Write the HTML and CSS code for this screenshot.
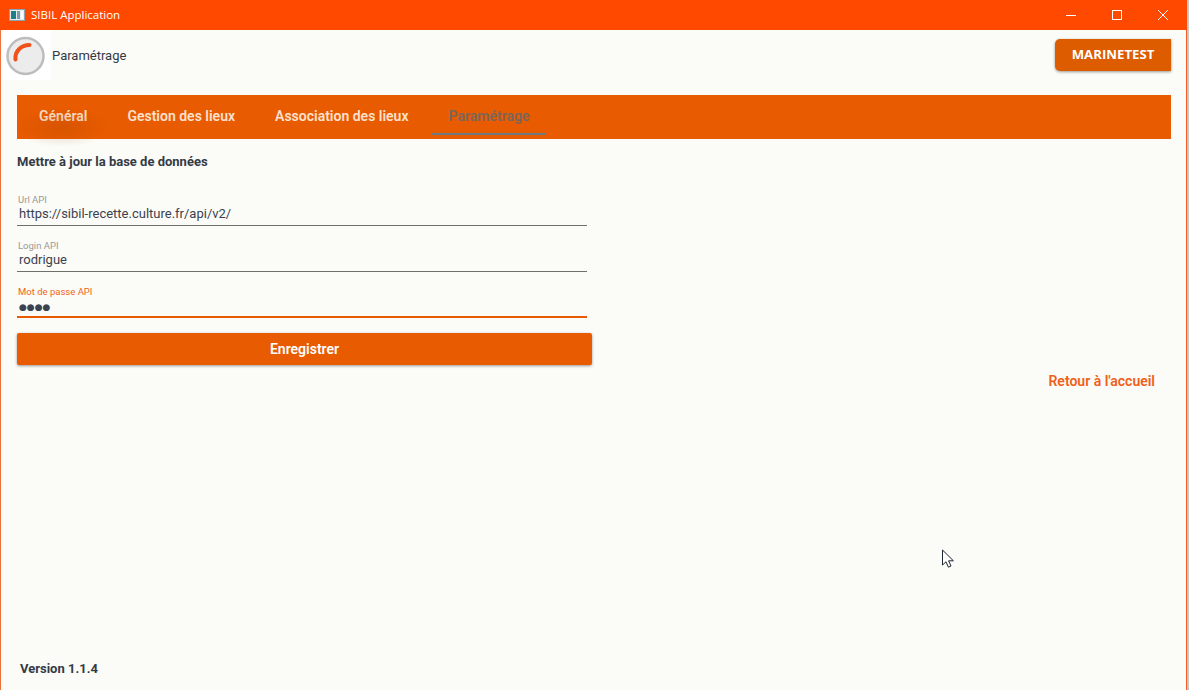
FILE: index.html
```html
<!DOCTYPE html>
<html lang="fr">
<head>
<meta charset="utf-8">
<title>SIBIL Application</title>
<link rel="stylesheet" href="styles.css">
</head>
<body>
<div class="window">
  <div class="titlebar">
    <svg class="app-icon" width="16" height="12" viewBox="0 0 16 12"><rect x="0.5" y="0.5" width="15" height="11" fill="#e6eef2" stroke="#8fa3ad"/><rect x="2" y="2" width="5" height="8" fill="#1f7f86"/><rect x="8" y="2" width="3" height="8" fill="#7f9aa8"/><rect x="12" y="2" width="2" height="8" fill="#fff"/></svg>
    <span class="app-title">SIBIL Application</span>
    <div class="win-controls">
      <span class="win-btn"><svg width="12" height="12" viewBox="0 0 12 12"><path d="M1 6.5h10" stroke="#fff" fill="none"/></svg></span>
      <span class="win-btn"><svg width="12" height="12" viewBox="0 0 12 12"><rect x="1.5" y="1.5" width="9" height="9" stroke="#fff" fill="none"/></svg></span>
      <span class="win-btn"><svg width="12" height="12" viewBox="0 0 12 12"><path d="M1 1l10 10M11 1L1 11" stroke="#fff" fill="none"/></svg></span>
    </div>
  </div>
  <div class="content">
    <header class="header">
      <div class="logo">
        <svg width="48" height="50" viewBox="0 0 48 50"><circle cx="22.5" cy="26" r="18" fill="#ececec" stroke="#bdbdbd" stroke-width="2.5"/><path d="M12.5 29.5C11.5 21.5 18 15 26.5 15" fill="none" stroke="#f0501a" stroke-width="4" stroke-linecap="round"/></svg>
      </div>
      <span class="page-name">Paramétrage</span>
      <button class="user-btn">MARINETEST</button>
    </header>
    <nav class="tabs">
      <span class="tab focused">Général</span>
      <span class="tab">Gestion des lieux</span>
      <span class="tab">Association des lieux</span>
      <span class="tab active">Paramétrage</span>
    </nav>
    <h2 class="section-title">Mettre à jour la base de données</h2>
    <form class="form">
      <div class="field"><label class="field-label">Url API</label><div class="field-value">https://sibil-recette.culture.fr/api/v2/</div></div>
      <div class="field"><label class="field-label">Login API</label><div class="field-value">rodrigue</div></div>
      <div class="field field-active"><label class="field-label">Mot de passe API</label><div class="field-value dots">●●●●</div></div>
    </form>
    <button class="save-btn">Enregistrer</button>
    <div class="back-row"><a class="back-link">Retour à l'accueil</a></div>
    <div class="version">Version 1.1.4</div>
    <svg class="cursor" width="14" height="20" viewBox="0 0 14 20"><path d="M1.5 1v15l3.5-3.2 2.4 5.4 2.6-1.2-2.4-5.2h4.8z" fill="#fff" stroke="#1c2430" stroke-width="1"/></svg>
  </div>
</div>
</body>
</html>
```
FILE: styles.css
```css
* { box-sizing: border-box; }
html, body { margin: 0; padding: 0; height: 100%; overflow: hidden; background: #c9c9c9; }
body { font-family: Roboto, "Liberation Sans", sans-serif; color: #333a45; }
.window { width: 1187px; height: 690px; display: flex; flex-direction: column; border-left: 1px solid #f0703c; border-right: 1px solid #f0602a; background: #fbfbf7; }
.titlebar { height: 30px; flex: none; background: #ff4800; display: flex; align-items: center; padding-left: 9px; color: #fff; margin: 0 -1px; }
.app-icon { display: block; }
.app-title { font-size: 11.5px; line-height: 14px; margin: 0 0 0 6px; font-family: "Open Sans", Roboto, sans-serif; }
.win-controls { margin-left: auto; display: flex; padding-right: 1px; }
.win-btn { width: 46px; height: 30px; display: flex; align-items: center; justify-content: center; }
.content { flex: 1; position: relative; display: flex; flex-direction: column; padding: 0 15px 13px 16px; }
.header { height: 65px; display: flex; align-items: flex-start; flex: none; margin-left: -14px; }
.logo { width: 48px; height: 50px; background: #fff; flex: none; }
.logo svg { display: block; }
.page-name { font-size: 13px; margin: 18px 0 0 1px; line-height: 15px; }
.user-btn { margin-left: auto; margin-top: 9px; width: 116px; height: 32px; border: 0; border-radius: 5px 0 0 5px; background: #dd5c00; color: #fff; font: 700 13.2px "Open Sans", Roboto, sans-serif; padding: 0 0 2px; box-shadow: 0 1px 3px rgba(0,0,0,.4); }
.tabs { height: 44px; flex: none; background: #e95b00; display: flex; padding-left: 5px; gap: 6px; }
.tab { position: relative; padding: 0 17px; font-size: 14px; font-weight: 600; line-height: 42px; color: #fde0cc; height: 44px; }
.tab.focused::after { content: ""; position: absolute; left: -8px; top: 12px; width: 96px; height: 40px; background: radial-gradient(closest-side, rgba(150,60,0,.22), rgba(150,60,0,0)); }
.tab.active { color: #79675a; }
.tab.active::before { content: ""; position: absolute; left: 0; right: 0; bottom: 4px; height: 2px; background: #6f7a80; }
.section-title { margin: 15px 0 0; font-size: 13px; line-height: 15px; font-weight: 700; height: 15px; }
.form { display: flex; flex-direction: column; gap: 14px; width: 570px; margin-top: 25px; }
.field { height: 32px; padding-top: 1px; border-bottom: 1px solid #70706a; }
.field-label { display: block; font-size: 9.5px; line-height: 10px; color: #9a9a96; padding-left: 1px; }
.field-value { font-size: 13px; line-height: 18px; color: #3c4250; padding-left: 2px; height: 18px; }
.dots { font-family: "DejaVu Sans", sans-serif; font-size: 9px; line-height: 20px; height: 20px; }
.field-active { border-bottom: 2px solid #e95b00; }
.field-active .field-label { color: #f0641e; }
.save-btn { margin-top: 15px; width: 575px; height: 32px; border: 0; border-radius: 2px; background: #e95b00; color: #fff; font: 600 14px Roboto, sans-serif; padding: 0; box-shadow: 0 1px 3px rgba(0,0,0,.4); flex: none; }
.back-row { display: flex; justify-content: flex-end; padding-right: 16px; margin-top: 8px; }
.back-link { font-size: 14px; font-weight: 600; line-height: 16px; color: #f0601c; }
.version { margin-top: auto; margin-left: 3px; font-size: 13px; font-weight: 700; line-height: 16px; }
.cursor { position: absolute; left: 940px; top: 519px; }
```
